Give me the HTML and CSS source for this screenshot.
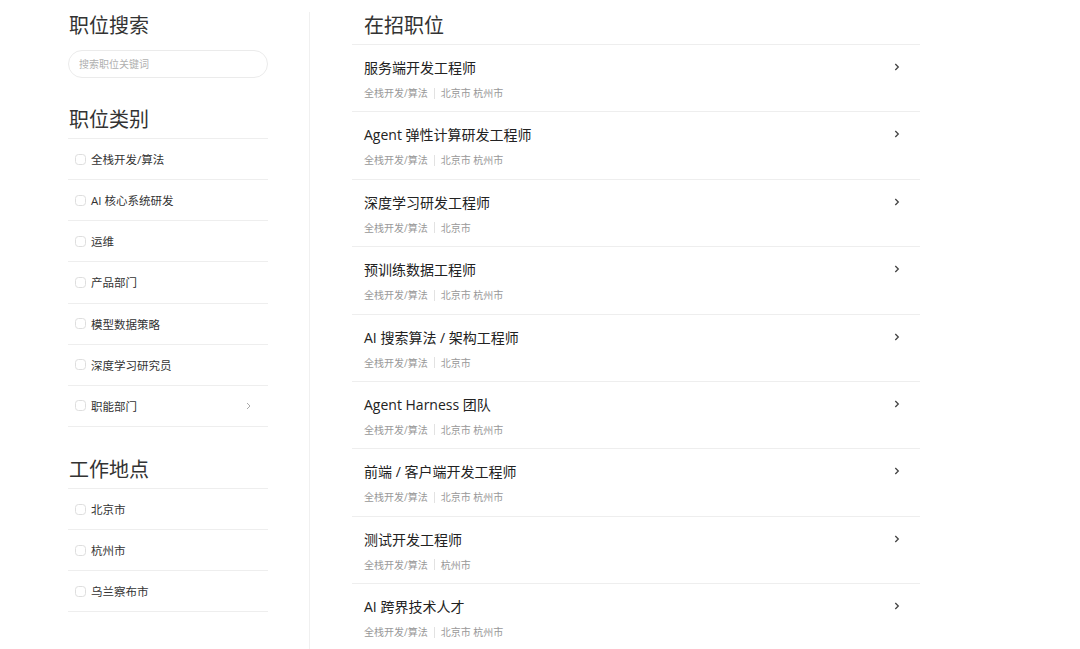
FILE: index.html
```html
<!DOCTYPE html>
<html lang="zh-CN">
<head>
<meta charset="utf-8">
<title>在招职位</title>
<link rel="stylesheet" href="styles.css">
</head>
<body>
<div class="page">
  <aside class="sidebar">
    <h2 class="heading heading-plain">职位搜索</h2>
    <div class="search"><input class="search-input" type="text" placeholder="搜索职位关键词"></div>

    <h2 class="heading heading-gap">职位类别</h2>
    <ul class="filter-list">
      <li class="filter-item"><span class="check"></span><span class="filter-label">全栈开发/算法</span></li>
      <li class="filter-item"><span class="check"></span><span class="filter-label">AI 核心系统研发</span></li>
      <li class="filter-item"><span class="check"></span><span class="filter-label">运维</span></li>
      <li class="filter-item"><span class="check"></span><span class="filter-label">产品部门</span></li>
      <li class="filter-item"><span class="check"></span><span class="filter-label">模型数据策略</span></li>
      <li class="filter-item"><span class="check"></span><span class="filter-label">深度学习研究员</span></li>
      <li class="filter-item"><span class="check"></span><span class="filter-label">职能部门</span>
        <svg class="filter-chevron" width="5" height="8" viewBox="0 0 5 8"><path d="M1 1 L4 4 L1 7" fill="none" stroke="#aaa" stroke-width="1"/></svg>
      </li>
    </ul>

    <h2 class="heading heading-gap heading-loc">工作地点</h2>
    <ul class="filter-list">
      <li class="filter-item"><span class="check"></span><span class="filter-label">北京市</span></li>
      <li class="filter-item"><span class="check"></span><span class="filter-label">杭州市</span></li>
      <li class="filter-item"><span class="check"></span><span class="filter-label">乌兰察布市</span></li>
    </ul>
  </aside>

  <div class="vline"></div>

  <main class="main">
    <h2 class="heading heading-main">在招职位</h2>
    <ul class="job-list">
      <li class="job">
        <div class="job-top"><span class="job-title">服务端开发工程师</span><svg class="chev" width="6" height="8" viewBox="0 0 6 8"><path d="M1.3 1 L4.3 4 L1.3 7" fill="none" stroke="#444" stroke-width="1.3"/></svg></div>
        <div class="job-meta"><span>全栈开发/算法</span><span class="sep"></span><span>北京市 杭州市</span></div>
      </li>
      <li class="job">
        <div class="job-top"><span class="job-title">Agent 弹性计算研发工程师</span><svg class="chev" width="6" height="8" viewBox="0 0 6 8"><path d="M1.3 1 L4.3 4 L1.3 7" fill="none" stroke="#444" stroke-width="1.3"/></svg></div>
        <div class="job-meta"><span>全栈开发/算法</span><span class="sep"></span><span>北京市 杭州市</span></div>
      </li>
      <li class="job">
        <div class="job-top"><span class="job-title">深度学习研发工程师</span><svg class="chev" width="6" height="8" viewBox="0 0 6 8"><path d="M1.3 1 L4.3 4 L1.3 7" fill="none" stroke="#444" stroke-width="1.3"/></svg></div>
        <div class="job-meta"><span>全栈开发/算法</span><span class="sep"></span><span>北京市</span></div>
      </li>
      <li class="job">
        <div class="job-top"><span class="job-title">预训练数据工程师</span><svg class="chev" width="6" height="8" viewBox="0 0 6 8"><path d="M1.3 1 L4.3 4 L1.3 7" fill="none" stroke="#444" stroke-width="1.3"/></svg></div>
        <div class="job-meta"><span>全栈开发/算法</span><span class="sep"></span><span>北京市 杭州市</span></div>
      </li>
      <li class="job">
        <div class="job-top"><span class="job-title">AI 搜索算法 / 架构工程师</span><svg class="chev" width="6" height="8" viewBox="0 0 6 8"><path d="M1.3 1 L4.3 4 L1.3 7" fill="none" stroke="#444" stroke-width="1.3"/></svg></div>
        <div class="job-meta"><span>全栈开发/算法</span><span class="sep"></span><span>北京市</span></div>
      </li>
      <li class="job">
        <div class="job-top"><span class="job-title">Agent Harness 团队</span><svg class="chev" width="6" height="8" viewBox="0 0 6 8"><path d="M1.3 1 L4.3 4 L1.3 7" fill="none" stroke="#444" stroke-width="1.3"/></svg></div>
        <div class="job-meta"><span>全栈开发/算法</span><span class="sep"></span><span>北京市 杭州市</span></div>
      </li>
      <li class="job">
        <div class="job-top"><span class="job-title">前端 / 客户端开发工程师</span><svg class="chev" width="6" height="8" viewBox="0 0 6 8"><path d="M1.3 1 L4.3 4 L1.3 7" fill="none" stroke="#444" stroke-width="1.3"/></svg></div>
        <div class="job-meta"><span>全栈开发/算法</span><span class="sep"></span><span>北京市 杭州市</span></div>
      </li>
      <li class="job">
        <div class="job-top"><span class="job-title">测试开发工程师</span><svg class="chev" width="6" height="8" viewBox="0 0 6 8"><path d="M1.3 1 L4.3 4 L1.3 7" fill="none" stroke="#444" stroke-width="1.3"/></svg></div>
        <div class="job-meta"><span>全栈开发/算法</span><span class="sep"></span><span>杭州市</span></div>
      </li>
      <li class="job">
        <div class="job-top"><span class="job-title">AI 跨界技术人才</span><svg class="chev" width="6" height="8" viewBox="0 0 6 8"><path d="M1.3 1 L4.3 4 L1.3 7" fill="none" stroke="#444" stroke-width="1.3"/></svg></div>
        <div class="job-meta"><span>全栈开发/算法</span><span class="sep"></span><span>北京市 杭州市</span></div>
      </li>
    </ul>
  </main>
</div>
</body>
</html>
```

FILE: styles.css
```css
* { box-sizing: border-box; }

html, body {
  margin: 0;
  padding: 0;
  background: #fff;
  height: 100%;
  overflow: hidden;
}

body {
  font-family: "Open Sans", "Noto Sans CJK SC", sans-serif;
  color: #333;
}

.page {
  display: flex;
  align-items: stretch;
  padding-left: 68px;
  min-height: 649px;
}

.sidebar {
  width: 200px;
  flex: none;
}

.heading {
  margin: 0;
  font-size: 20px;
  line-height: 28px;
  font-weight: 400;
  color: #333;
  padding-left: 1px;
}

.heading-plain { margin-top: 12px; }

.heading-gap {
  margin-top: 28px;
  padding-bottom: 4px;
}

.heading-loc { margin-top: 29px; }

.search {
  margin-top: 10px;
}

.search-input {
  display: block;
  width: 200px;
  height: 28px;
  border: 1px solid #ebebeb;
  border-radius: 14px;
  padding: 0 10px;
  font-family: "Open Sans", "Noto Sans CJK SC", sans-serif;
  font-size: 10px;
  color: #333;
  outline: none;
  background: #fff;
}

.search-input::placeholder { color: #b0b0b0; }

.filter-list {
  list-style: none;
  margin: 0;
  padding: 0;
  border-top: 1px solid #eee;
}

.filter-item {
  display: flex;
  align-items: center;
  height: 41.15px;
  border-bottom: 1px solid #eee;
  padding: 0 17px 0 7px;
  font-size: 11.5px;
  color: #333;
}

.check {
  width: 11px;
  height: 11px;
  border: 1px solid #dedede;
  border-radius: 3.5px;
  flex: none;
  margin-right: 5px;
}

.filter-label { flex: 1; }

.filter-chevron { flex: none; }

.vline {
  flex: none;
  width: 1px;
  margin-left: 41px;
  margin-top: 12px;
  background: #f0f0f0;
}

.main {
  width: 568px;
  flex: none;
  margin-left: 42px;
}

.heading-main {
  margin-top: 12px;
  padding-left: 12px;
  padding-bottom: 4px;
}

.job-list {
  list-style: none;
  margin: 0;
  padding: 0;
  border-top: 1px solid #eee;
}

.job {
  border-bottom: 1px solid #eee;
  padding: 13px 20px 11.4px 12px;
}

.job-top {
  display: flex;
  align-items: center;
  justify-content: space-between;
  height: 20px;
}

.job-title {
  font-size: 14px;
  line-height: 20px;
  color: #222;
}

.chev { flex: none; margin-top: -2px; }

.job-meta {
  display: flex;
  align-items: center;
  margin-top: 8px;
  height: 14px;
  font-size: 10px;
  line-height: 14px;
  color: #999;
}

.sep {
  width: 1px;
  height: 11px;
  background: #e2e2e2;
  margin: 0 6px;
}
```
